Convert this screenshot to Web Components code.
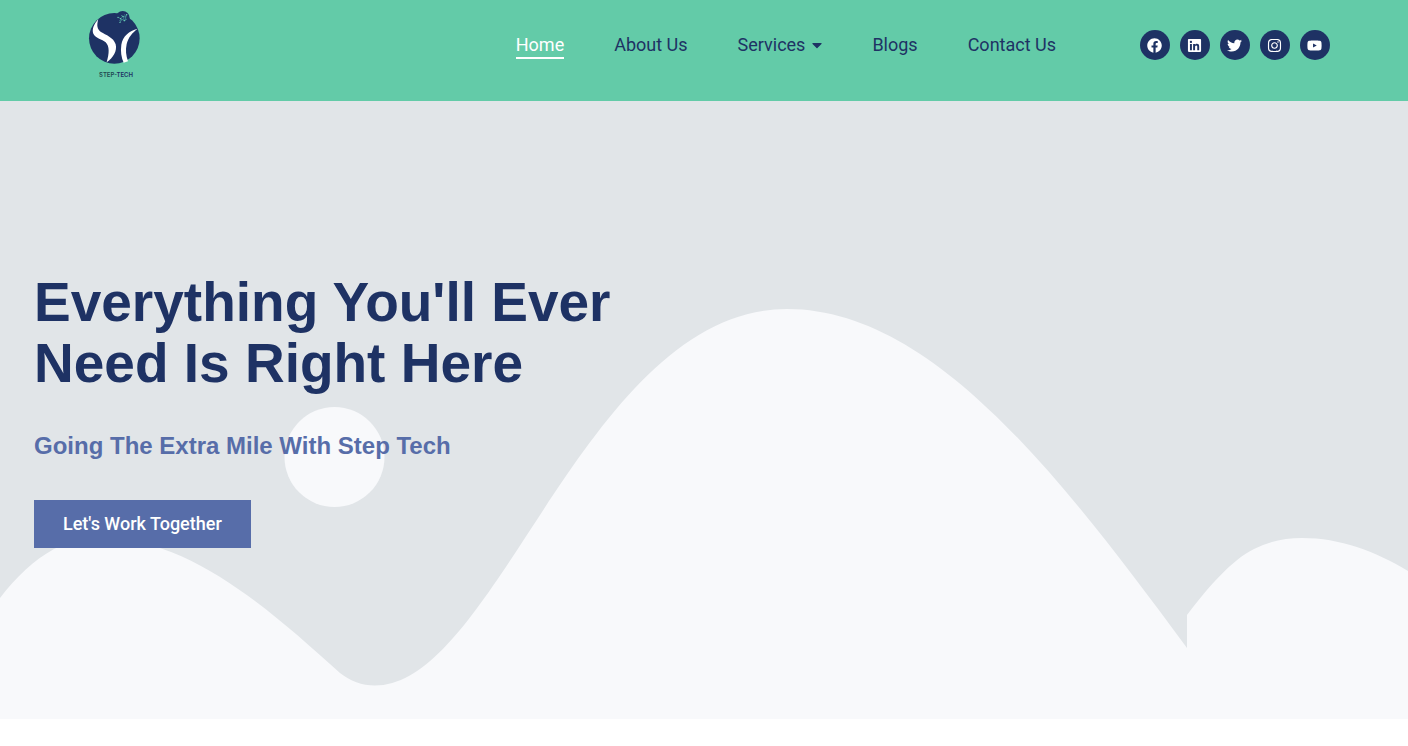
<!DOCTYPE html>
<html lang="en">
<head>
<meta charset="utf-8">
<meta name="viewport" content="width=device-width, initial-scale=1">
<title>Step Tech</title>
<style>
  body {
    margin: 0;
    background: #fff;
    font-family: Roboto, sans-serif;
    --green: #63cba8;
    --navy: #1e3264;
    --blue: #576da9;
  }
</style>
</head>
<body>
<site-header>
  <step-logo slot="logo"></step-logo>
  <nav-item href="#home" current>Home</nav-item>
  <nav-item href="#about">About Us</nav-item>
  <nav-item href="#services" menu>Services</nav-item>
  <nav-item href="#blogs">Blogs</nav-item>
  <nav-item href="#contact">Contact Us</nav-item>
  <social-link slot="social" network="facebook"></social-link>
  <social-link slot="social" network="linkedin"></social-link>
  <social-link slot="social" network="twitter"></social-link>
  <social-link slot="social" network="instagram"></social-link>
  <social-link slot="social" network="youtube"></social-link>
</site-header>
<hero-banner>
  <span slot="title">Everything You'll Ever Need Is Right Here</span>
  <span slot="subtitle">Going The Extra Mile With Step Tech</span>
  <span slot="action">Let's Work Together</span>
</hero-banner>

<script>
const define = (name, render) => customElements.define(name, class extends HTMLElement {
  constructor() {
    super();
    this.attachShadow({ mode: 'open' });
  }
  connectedCallback() {
    this.shadowRoot.innerHTML = render(this);
  }
});

define('site-header', () => `
  <style>
    :host { display: block; background: var(--green); }
    header { display: flex; align-items: flex-start; min-height: 101px; box-sizing: border-box; padding: 0 78px 0 80px; }
    .logo { margin-right: auto; padding-top: 4px; }
    nav { display: flex; gap: 50px; padding-top: 32px; }
    .social { display: flex; gap: 10px; padding-top: 30px; margin-left: 84px; }
    @media (max-width: 1000px) {
      header { flex-wrap: wrap; padding: 0 20px 20px; }
      nav { flex-wrap: wrap; gap: 20px; }
      .social { margin-left: 20px; }
    }
  </style>
  <header>
    <div class="logo"><slot name="logo"></slot></div>
    <nav aria-label="Main"><slot></slot></nav>
    <div class="social"><slot name="social"></slot></div>
  </header>`);

define('step-logo', () => `
  <style>
    :host { display: block; }
    a { display: flex; flex-direction: column; align-items: center; width: 72px; color: var(--navy); text-decoration: none; }
    svg { display: block; width: 72px; height: 62px; }
    span { font: 600 6px/10px Inter, sans-serif; padding-top: 4px; }
    b { font-weight: 600; color: #1f4a50; }
  </style>
  <a href="#home">
    <svg viewBox="0 0 216 186" aria-hidden="true">
      <circle cx="103" cy="103" r="76" fill="#1e3264"/>
      <circle cx="128" cy="42" r="21" fill="#1e3264"/>
      <path fill="#fff" d="M55 46C42 60 35 76 40 89C48 104 66 105 77 115C89 127 88 148 80 175C100 161 112 141 107 121C101 100 77 93 63 84C52 76 49 66 55 46Z"/>
      <path fill="#fff" d="M173 74C147 80 128 97 124 122C121 142 124 160 131 176L144 172C138 154 136 138 140 120C145 100 157 86 173 74Z"/>
      <g stroke="#4a9d9f" stroke-width="2" fill="none">
        <path d="M114 40l8 4 7-7 8 3 3-8M118 50l8-4 7 4 8-5M123 34l6 3 4 13M120 55l6-9M134 31l3 9-2 10"/>
      </g>
      <g fill="#6fd6b8">
        <circle cx="114" cy="40" r="2"/><circle cx="122" cy="44" r="2"/><circle cx="129" cy="37" r="2"/>
        <circle cx="140" cy="32" r="2"/><circle cx="133" cy="50" r="2"/><circle cx="120" cy="55" r="2"/>
      </g>
    </svg>
    <span><b>STEP-</b>TECH</span>
  </a>`);

define('nav-item', el => `
  <style>
    :host { display: block; }
    a { display: flex; align-items: center; gap: 7px; color: var(--navy); font-size: 18px; line-height: 25px; padding-bottom: 2px; text-decoration: none; white-space: nowrap; }
    :host([current]) a { color: #fff; padding-bottom: 0; border-bottom: 2px solid #fff; }
    svg { width: 10px; height: 18px; }
  </style>
  <a href="${el.getAttribute('href')}"${el.hasAttribute('current') ? ' aria-current="page"' : ''}><slot></slot>${el.hasAttribute('menu')
    ? '<svg viewBox="0 0 320 512" fill="currentColor" aria-hidden="true"><path d="M31.3 192h257.3c17.8 0 26.7 21.5 14.1 34.1L174.1 354.8c-7.8 7.8-20.5 7.8-28.3 0L17.2 226.1C4.6 213.5 13.5 192 31.3 192z"/></svg>' : ''}</a>`);

const NETWORKS = {
  facebook: ['Facebook', 512, 'M504 256C504 119 393 8 256 8S8 119 8 256c0 123.78 90.69 226.38 209.25 245V327.69h-63V256h63v-54.64c0-62.15 37-96.48 93.67-96.48 27.14 0 55.52 4.84 55.52 4.84v61h-31.28c-30.8 0-40.41 19.12-40.41 38.73V256h68.78l-11 71.69h-57.78V501C413.31 482.38 504 379.78 504 256z'],
  linkedin: ['LinkedIn', 448, 'M416 32H31.9C14.3 32 0 46.5 0 64.3v383.4C0 465.5 14.3 480 31.9 480H416c17.6 0 32-14.5 32-32.3V64.3c0-17.8-14.4-32.3-32-32.3zM135.4 416H69V202.2h66.5V416zm-33.2-243c-21.3 0-38.5-17.3-38.5-38.5S80.9 96 102.2 96c21.2 0 38.5 17.3 38.5 38.5 0 21.3-17.2 38.5-38.5 38.5zm282.1 243h-66.4V312c0-24.8-.5-56.7-34.5-56.7-34.6 0-39.9 27-39.9 54.9V416h-66.4V202.2h63.7v29.2h.9c8.9-16.8 30.6-34.5 62.9-34.5 67.2 0 79.7 44.3 79.7 101.9V416z'],
  twitter: ['Twitter', 512, 'M459.37 151.716c.325 4.548.325 9.097.325 13.645 0 138.72-105.583 298.558-298.558 298.558-59.452 0-114.68-17.219-161.137-47.106 8.447.974 16.568 1.299 25.34 1.299 49.055 0 94.213-16.568 130.274-44.832-46.132-.975-84.792-31.188-98.112-72.772 6.498.974 12.995 1.624 19.818 1.624 9.421 0 18.843-1.3 27.614-3.573-48.081-9.747-84.143-51.98-84.143-102.985v-1.299c13.969 7.797 30.214 12.67 47.431 13.319-28.264-18.843-46.781-51.005-46.781-87.391 0-19.492 5.197-37.36 14.294-52.954 51.655 63.675 129.3 105.258 216.365 109.807-1.624-7.797-2.599-15.918-2.599-24.04 0-57.828 46.782-104.934 104.934-104.934 30.213 0 57.502 12.67 76.67 33.137 23.715-4.548 46.456-13.32 66.599-25.34-7.798 24.366-24.366 44.833-46.132 57.827 21.117-2.273 41.584-8.122 60.426-16.243-14.292 20.791-32.161 39.308-52.628 54.253z'],
  instagram: ['Instagram', 448, 'M224.1 141c-63.6 0-114.9 51.3-114.9 114.9s51.3 114.9 114.9 114.9S339 319.5 339 255.9 287.7 141 224.1 141zm0 189.6c-41.1 0-74.7-33.5-74.7-74.7s33.5-74.7 74.7-74.7 74.7 33.5 74.7 74.7-33.6 74.7-74.7 74.7zm146.4-194.3c0 14.9-12 26.8-26.8 26.8-14.9 0-26.8-12-26.8-26.8s12-26.8 26.8-26.8 26.8 12 26.8 26.8zm76.1 27.2c-1.7-35.9-9.9-67.7-36.2-93.9-26.2-26.2-58-34.4-93.9-36.2-37-2.1-147.9-2.1-184.9 0-35.8 1.7-67.6 9.9-93.9 36.1s-34.4 58-36.2 93.9c-2.1 37-2.1 147.9 0 184.9 1.7 35.9 9.9 67.7 36.2 93.9s58 34.4 93.9 36.2c37 2.1 147.9 2.1 184.9 0 35.9-1.7 67.7-9.9 93.9-36.2 26.2-26.2 34.4-58 36.2-93.9 2.1-37 2.1-147.8 0-184.8zM398.8 388c-7.8 19.6-22.9 34.7-42.6 42.6-29.5 11.7-99.5 9-132.1 9s-102.7 2.6-132.1-9c-19.6-7.8-34.7-22.9-42.6-42.6-11.7-29.5-9-99.5-9-132.1s-2.6-102.7 9-132.1c7.8-19.6 22.9-34.7 42.6-42.6 29.5-11.7 99.5-9 132.1-9s102.7-2.6 132.1 9c19.6 7.8 34.7 22.9 42.6 42.6 11.7 29.5 9 99.5 9 132.1s2.7 102.7-9 132.1z'],
  youtube: ['YouTube', 576, 'M549.655 124.083c-6.281-23.65-24.787-42.276-48.284-48.597C458.781 64 288 64 288 64S117.22 64 74.629 75.486c-23.497 6.322-42.003 24.947-48.284 48.597-11.412 42.867-11.412 132.305-11.412 132.305s0 89.438 11.412 132.305c6.281 23.65 24.787 41.5 48.284 47.821C117.22 448 288 448 288 448s170.78 0 213.371-11.486c23.497-6.321 42.003-24.171 48.284-47.821 11.412-42.867 11.412-132.305 11.412-132.305s0-89.438-11.412-132.305zm-317.51 213.508V175.185l142.739 81.205-142.739 81.201z']
};

define('social-link', el => {
  const [label, width, path] = NETWORKS[el.getAttribute('network')];
  return `
  <style>
    :host { display: block; }
    a { display: flex; align-items: center; box-sizing: border-box; width: 30px; height: 30px; padding-left: 7px; border-radius: 50%; background: var(--navy); color: #fff; }
    svg { width: 15px; height: 15px; }
  </style>
  <a href="#${el.getAttribute('network')}" aria-label="${label}">
    <svg viewBox="0 0 ${width} 512" fill="currentColor" aria-hidden="true"><path d="${path}"/></svg>
  </a>`;
});

define('hero-banner', () => `
  <style>
    :host { display: block; position: relative; background: #e1e5e8; }
    .waves { position: absolute; inset: 0; width: 100%; height: 100%; }
    .content { position: relative; padding: 171px 34px; display: flex; flex-direction: column; align-items: flex-start; }
    h1 { margin: 0; max-width: 636px; font: 700 55px/61px "Liberation Sans", Arial, sans-serif; color: var(--navy); }
    h2 { margin: 39px 0 41px; font: 700 24px/26px "Liberation Sans", Arial, sans-serif; color: var(--blue); }
    button { height: 48px; padding: 0 29px; border: 0; background: var(--blue); color: #fff; font: 500 18px/18px Roboto, sans-serif; cursor: pointer; }
  </style>
  <svg class="waves" viewBox="0 101 1408 618" preserveAspectRatio="none" fill="#f8f9fb" aria-hidden="true">
    <path d="M0 598C16 577 34 560 54 549C70 541 86 538 102 538C190 538 270 610 340 673C350 681 362 685.5 375 685.5C497 685.5 587 309 787 309C930 309 1056 470 1187 648V615C1210 585 1232 560 1254 549C1270 541 1286 538 1302 538C1340 538 1375 551 1408 571V719H0Z"/>
    <circle cx="334.5" cy="457" r="50"/>
  </svg>
  <div class="content">
    <h1><slot name="title"></slot></h1>
    <h2><slot name="subtitle"></slot></h2>
    <button type="button"><slot name="action"></slot></button>
  </div>`);
</script>
</body>
</html>
